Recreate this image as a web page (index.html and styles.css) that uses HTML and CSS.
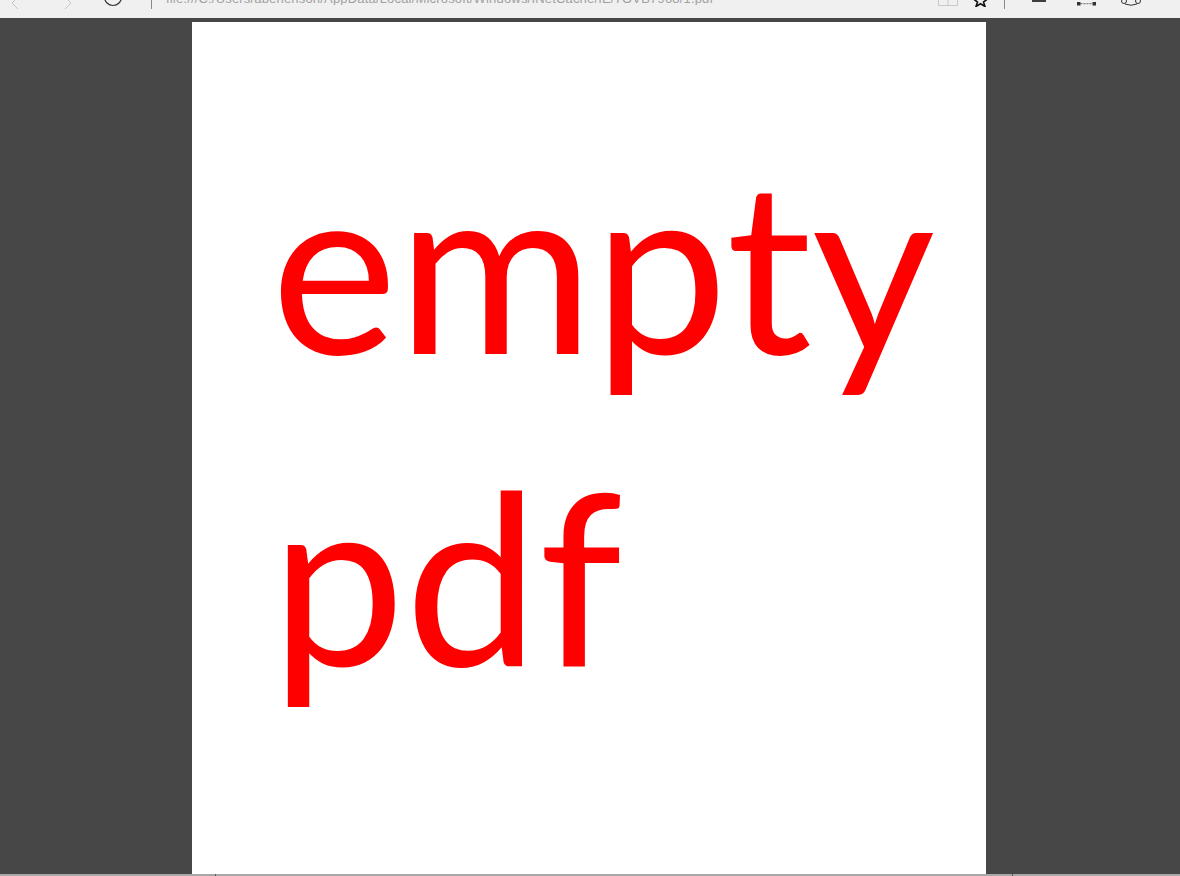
FILE: index.html
```html
<!DOCTYPE html>
<html lang="en">
<head>
<meta charset="utf-8">
<title>empty pdf</title>
<link rel="stylesheet" href="styles.css">
</head>
<body>
<header class="toolbar">
  <div class="nav">
    <svg class="ic back" width="12" height="12" viewBox="0 0 12 12"><path d="M9 -3 L3 3 L9 9" fill="none" stroke="#c4c4c4" stroke-width="1"/></svg>
    <svg class="ic forward" width="12" height="12" viewBox="0 0 12 12"><path d="M3 -3 L9 3 L3 9" fill="none" stroke="#c4c4c4" stroke-width="1"/></svg>
    <svg class="ic refresh" width="20" height="8" viewBox="0 0 20 8"><path d="M1.500 -3 A8.500 8.500 0 0 0 18.500 -3" fill="none" stroke="#333" stroke-width="1.200"/></svg>
    <span class="sep"></span>
  </div>
  <div class="url">file:///C:/Users/abenenson/AppData/Local/Microsoft/Windows/INetCache/IE/7OVB7968/1.pdf</div>
  <div class="tools">
    <svg class="ic book" width="20" height="6" viewBox="0 0 20 6"><path d="M.5 0V5.500H19.500V0M10 0V5.500" fill="none" stroke="#c8c8c8"/></svg>
    <svg class="ic star" width="15" height="7" viewBox="0 0 15 7"><path d="M7.500 -7 L9.500 -1 H14.500 L10.500 2 L12 6.500 L7.500 3.800 L3 6.500 L4.500 2 L.5 -1 H5.500 Z" fill="none" stroke="#111" stroke-width="1.600"/></svg>
    <span class="sep"></span>
    <svg class="ic hub" width="14" height="3" viewBox="0 0 14 3"><path d="M0 1H14" stroke="#111" stroke-width="1.600"/></svg>
    <svg class="ic note" width="19" height="6" viewBox="0 0 19 6"><rect x="0" y="2" width="3.500" height="3.500" fill="#333"/><rect x="15.500" y="2" width="3.500" height="3.500" fill="#333"/><path d="M3.500 3.700H15.500" stroke="#666" stroke-dasharray="2 1"/></svg>
    <svg class="ic share" width="20" height="7" viewBox="0 0 20 7"><circle cx="3" cy="1" r="2.500" fill="none" stroke="#333"/><circle cx="17" cy="1" r="2.500" fill="none" stroke="#333"/><path d="M4 4Q10 6.500 16 4" fill="none" stroke="#333"/></svg>
  </div>
</header>
<main class="viewer">
  <article class="page">
    <p class="line">empty</p>
    <p class="line">pdf</p>
  </article>
</main>
<footer class="bottom"><span class="tick"></span><span class="tick tick-right"></span></footer>
</body>
</html>
```
FILE: styles.css
```css
* { box-sizing: border-box; }
html, body { margin: 0; height: 100%; }
body { width: 1180px; height: 876px; overflow: hidden; display: flex; flex-direction: column; background: #474747; font-family: "Liberation Sans", Arial, sans-serif; }
.toolbar { height: 18px; flex: none; background: #f0f0f0; display: flex; overflow: hidden; align-items: flex-start; }
.nav { width: 166px; flex: none; display: flex; align-items: flex-start; }
.ic { display: block; flex: none; }
.back { margin-left: 9px; }
.forward { margin-left: 41px; }
.refresh { margin-left: 29px; }
.sep { width: 1px; height: 9px; background: #8a8a8a; flex: none; }
.nav .sep { margin-left: 28px; }
.url { flex: 1; font-size: 13px; line-height: 13px; margin-top: -8px; letter-spacing: .18px; color: #a0a0a0; white-space: nowrap; overflow: hidden; }
.tools { width: 270px; flex: none; display: flex; align-items: flex-start; }
.book { margin-left: 28px; }
.star { margin-left: 15px; }
.tools .sep { margin-left: 16px; }
.hub { margin-left: 27px; }
.note { margin-left: 31px; }
.share { margin-left: 25px; }
.viewer { flex: 1; min-height: 0; padding-top: 4px; display: flex; justify-content: center; margin-left: -2px; }
.page { width: 794px; background: #fff; padding: 84px 0 0 79px; overflow: hidden; }
.line { margin: 0; font-family: Lato, "Open Sans", sans-serif; font-size: 239px; line-height: 312px; color: #f00; white-space: nowrap; }
.bottom { height: 2px; flex: none; background: #a8a8a8; display: flex; padding-left: 215px; }
.tick { width: 1px; height: 2px; background: #555; flex: none; }
.tick-right { margin-left: 796px; }
```
